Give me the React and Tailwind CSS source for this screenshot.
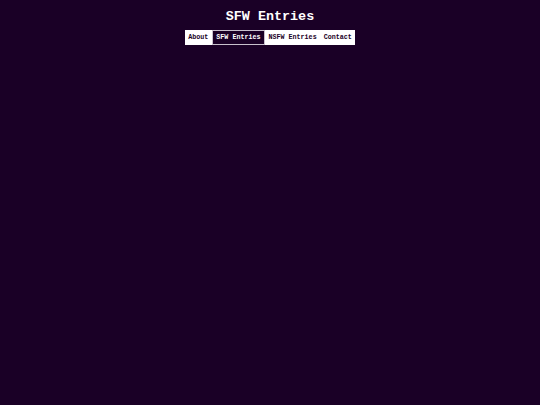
import React from "react";

const links = ["About", "SFW Entries", "NSFW Entries", "Contact"];

const App = () => {
  return (
    <div
      className="min-h-[405px] w-full bg-[#1a0026] flex flex-col items-center"
      style={{ fontFamily: '"Liberation Mono", "DejaVu Sans Mono", monospace' }}
    >
      <h1 className="mt-[8px] text-[13.4px] leading-[18px] font-bold text-white">
        SFW Entries
      </h1>

      <nav className="mt-[4px] flex bg-white h-[15px]">
        {links.map((link) => (
          <a
            key={link}
            href="#"
            className={
              link === "SFW Entries"
                ? "flex items-center px-[3.5px] text-[6.7px] font-bold bg-[#1a0026] text-white border border-[#c8c0cc]"
                : "flex items-center px-[3.5px] text-[6.7px] font-bold text-[#1a0026]"
            }
          >
            {link}
          </a>
        ))}
      </nav>
    </div>
  );
};

export default App;
